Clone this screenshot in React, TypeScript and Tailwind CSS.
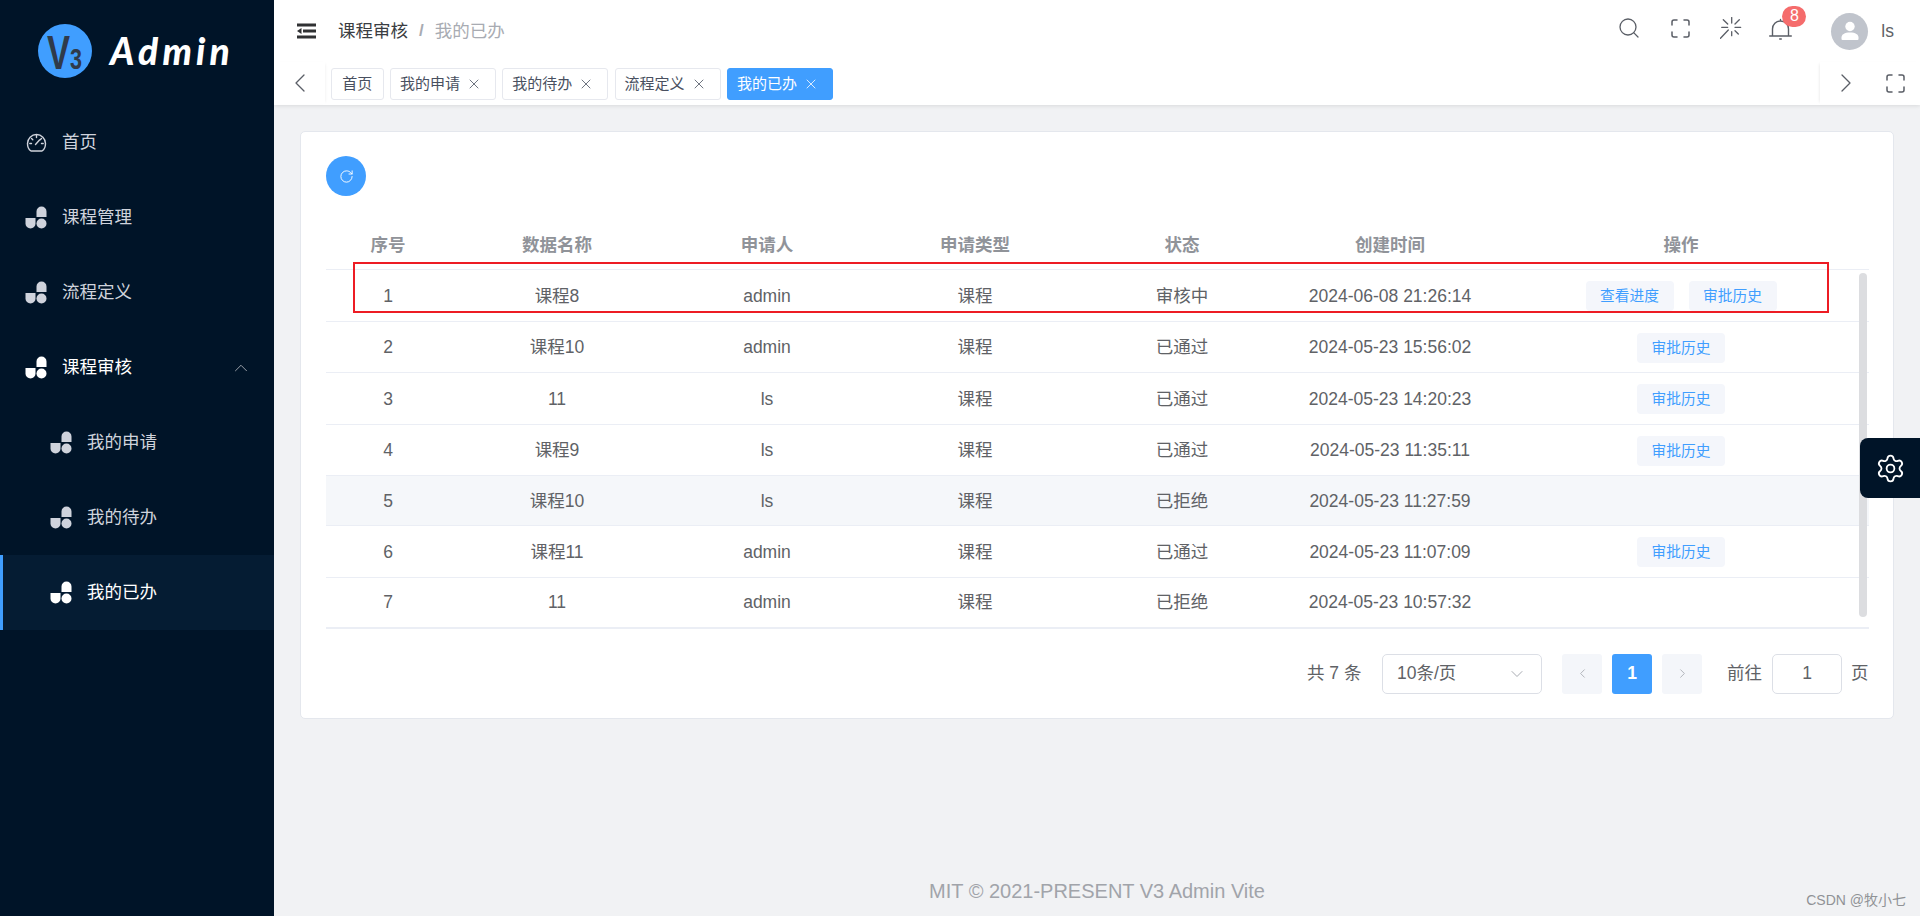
import React from "react";
import { ChevronDown, ChevronLeft, ChevronRight, ChevronUp, X, Search, Settings, RotateCw } from "lucide-react";

const sans = "font-['Liberation_Sans','Noto_Sans_CJK_SC',sans-serif]";

function Pills() {
  return (
    <svg width="22" height="23" viewBox="0 0 22 23" className="shrink-0">
      <path d="M16.500 0.500a5 5 0 0 1 5 5v5.500h-10V5.500a5 5 0 0 1 5-5z" fill="currentColor" />
      <path d="M0.500 12h10v5.500a5 5 0 0 1-10 0z" fill="currentColor" />
      <circle cx="16.500" cy="17.500" r="5" fill="currentColor" />
    </svg>
  );
}

function GaugeIcon() {
  return (
    <svg width="22" height="19" viewBox="0 0 22 19" fill="none" stroke="currentColor" strokeWidth="1.400" strokeLinecap="round" strokeLinejoin="round" className="shrink-0">
      <path d="M6 18C3.700 16.500 2.500 13.500 2.500 10.500a9 9 0 0 1 18 0c0 3-1.200 6-3.500 7.500z" />
      <path d="M11.500 2.500v2M4.800 10.500h1.700M16.500 10.500h1.700M6.500 5.500l1.300 1.300M16.500 5.500l-1.300 1.300M10.500 11.500l4-4.500" />
    </svg>
  );
}

function LogoMark() {
  return (
    <svg width="54" height="54" viewBox="0 0 54 54" className="shrink-0">
      <circle cx="27" cy="27" r="27" fill="#409eff" />
      <g transform="translate(9 45) scale(0.72 1)">
        <text x="0" y="0" fontFamily="'Liberation Sans', sans-serif" fontWeight="700" fill="#2f3a4a">
          <tspan fontSize="48">V</tspan>
          <tspan fontSize="30">3</tspan>
        </text>
      </g>
    </svg>
  );
}

function Chev({ right }: { right?: boolean }) {
  return (
    <svg width="10" height="18" viewBox="0 0 10 18" fill="none" stroke="currentColor" strokeWidth="1.300" strokeLinecap="round" strokeLinejoin="round">
      <path d={right ? "M1 1l8 8-8 8" : "M9 1L1 9l8 8"} />
    </svg>
  );
}

function Corners() {
  return (
    <svg width="19" height="19" viewBox="0 0 19 19" fill="none" stroke="currentColor" strokeWidth="1.500" strokeLinecap="round">
      <path d="M1 6V3a2 2 0 0 1 2-2h3M13 1h3a2 2 0 0 1 2 2v3M18 13v3a2 2 0 0 1-2 2h-3M6 18H3a2 2 0 0 1-2-2v-3" />
    </svg>
  );
}

function Spark() {
  return (
    <svg width="22" height="22" viewBox="0 0 22 22" fill="none" stroke="currentColor" strokeWidth="1.300" strokeLinecap="round">
      <path d="M11.700 0.500V6M19.300 2.700L15 7M20.700 10.300H15M18.300 17L15 13.700M11.700 18.700v-4M1.700 10.300h6M3.300 2.700L7.700 7M0.500 21.300L8.300 13" />
    </svg>
  );
}

function BellIcon() {
  return (
    <svg width="23" height="23" viewBox="0 0 23 23" fill="none" stroke="currentColor" strokeWidth="1.400" strokeLinecap="round">
      <path d="M0.700 18h21.600M3.500 18v-7a8 8 0 0 1 16 0v7M11.500 3V1.500M10.700 21h1.600" />
    </svg>
  );
}

function Fold() {
  return (
    <svg width="19" height="16" viewBox="0 0 19 16" fill="#303133">
      <rect x="0" y="0.500" width="19" height="3" />
      <rect x="6" y="6.500" width="13" height="3" />
      <rect x="0" y="12.500" width="19" height="3" />
      <path d="M0 8l4.500-3v6z" />
    </svg>
  );
}

function MenuItem({ label, sub, active, bright, arrow, gauge }: { label: string; sub?: boolean; active?: boolean; bright?: boolean; arrow?: boolean; gauge?: boolean }) {
  return (
    <div className={`relative flex h-[75px] items-center ${sub ? "pl-[50px]" : "pl-[25px]"} ${active ? "bg-[#051c33] text-white" : bright ? "text-white" : "text-[#cfd3dc]"}`}>
      {active && <div className="absolute inset-y-0 left-0 w-[3px] bg-[#409eff]" />}
      {gauge ? <GaugeIcon /> : <Pills />}
      <span className="ml-[15px] text-[17.500px]">{label}</span>
      {arrow && <ChevronUp size={22} strokeWidth={1} className="absolute left-[230px] text-[#a9adb5]" />}
    </div>
  );
}

function Tab({ label, active, close = true }: { label: string; active?: boolean; close?: boolean }) {
  return (
    <div className={`flex h-[32px] items-center rounded-[3px] border text-[15px] ${close ? "w-[106px] pl-[9px]" : "w-[52.700px] justify-center"} ${active ? "border-[#409eff] bg-[#409eff] text-white" : "border-[#e6e8ee] bg-white text-[#495060]"}`}>
      <span className="whitespace-nowrap">{label}</span>
      {close && <X size={16} strokeWidth={1.200} className="ml-[6px] shrink-0" />}
    </div>
  );
}

const Btn = ({ label }: { label: string }) => (
  <div className="flex h-[30px] w-[88px] items-center justify-center rounded-[4px] bg-[#f4f6fb] text-[14.700px] text-[#409eff]">{label}</div>
);

const cols = "grid grid-cols-[124px_214px_206px_210px_204px_212px_370px_3px]";

const rows = [
  ["1", "课程8", "admin", "课程", "审核中", "2024-06-08 21:26:14", 2],
  ["2", "课程10", "admin", "课程", "已通过", "2024-05-23 15:56:02", 1],
  ["3", "11", "ls", "课程", "已通过", "2024-05-23 14:20:23", 1],
  ["4", "课程9", "ls", "课程", "已通过", "2024-05-23 11:35:11", 1],
  ["5", "课程10", "ls", "课程", "已拒绝", "2024-05-23 11:27:59", 0],
  ["6", "课程11", "admin", "课程", "已通过", "2024-05-23 11:07:09", 1],
  ["7", "11", "admin", "课程", "已拒绝", "2024-05-23 10:57:32", 0],
] as const;

export default function App() {
  return (
    <div className={`flex h-[916px] w-[1920px] overflow-hidden bg-[#f1f2f4] ${sans}`}>
      <aside className="w-[274px] shrink-0 bg-[#001428]">
        <div className="flex h-[105px] items-center pl-[38px] pb-[3px]">
          <LogoMark />
          <span className="mb-[2px] ml-[18px] font-['Lato',sans-serif] text-[37px] font-black italic leading-none tracking-[4.200px] text-white">Admin</span>
        </div>
        <MenuItem label="首页" gauge />
        <MenuItem label="课程管理" />
        <MenuItem label="流程定义" />
        <MenuItem label="课程审核" bright arrow />
        <MenuItem label="我的申请" sub />
        <MenuItem label="我的待办" sub />
        <MenuItem label="我的已办" sub active />
      </aside>

      <div className="relative flex min-w-0 flex-1 flex-col">
        <header className="h-[105px] shrink-0 bg-white shadow-[0_1px_4px_rgba(0,0,0,0.1)]">
          <div className="flex h-[62px] items-center pl-[23px] pr-[26px]">
            <Fold />
            <span className="ml-[22px] text-[17.500px] text-[#3a3d42]">课程审核</span>
            <span className="mx-[11px] text-[17px] font-bold text-[#a8abb2]">/</span>
            <span className="text-[17.500px] text-[#a8abb2]">我的已办</span>
            <div className="ml-auto flex items-center text-[#5a5e66]">
              <div className="mb-[6px] flex items-center">
                <Search size={24} strokeWidth={1.300} />
                <div className="ml-[30px]"><Corners /></div>
                <div className="ml-[30px]"><Spark /></div>
                <div className="relative ml-[27px] mt-[2px]">
                  <BellIcon />
                  <span className="absolute -top-[12px] left-[13px] flex h-[21px] w-[24px] items-center justify-center rounded-full bg-[#f56c6c] text-[16px] text-white">8</span>
                </div>
              </div>
              <div className="ml-[39px] flex h-[37px] w-[37px] items-center justify-center rounded-full bg-[#c0c4cc]">
                <svg width="20" height="20" viewBox="0 0 20 20" fill="white">
                  <circle cx="10" cy="5.500" r="4.700" />
                  <path d="M1.500 18v-1.500c0-3 3-5 8.500-5s8.500 2 8.500 5V18a1 1 0 0 1-1 1h-15a1 1 0 0 1-1-1z" />
                </svg>
              </div>
              <span className="ml-[13px] text-[17.500px] text-[#606266]">ls</span>
            </div>
          </div>
          <div className="flex h-[43px] items-start">
            <div className="flex h-[42px] w-[51px] items-center pl-[21px] text-[#5a5e66] shadow-[2px_0_3px_-2px_rgba(0,0,0,0.08)]">
              <Chev />
            </div>
            <div className="ml-[6px] mt-[6px] flex gap-[6.300px]">
              <Tab label="首页" close={false} />
              <Tab label="我的申请" />
              <Tab label="我的待办" />
              <Tab label="流程定义" />
              <Tab label="我的已办" active />
            </div>
            <div className="ml-auto flex h-[42px] w-[100px] items-center pl-[21px] text-[#5a5e66] shadow-[-2px_0_3px_-2px_rgba(0,0,0,0.12)]">
              <Chev right />
              <div className="ml-[35px]"><Corners /></div>
            </div>
          </div>
        </header>

        <main className="flex-1 pl-[26px] pt-[26px]">
          <section className="h-[588px] w-[1594px] rounded-[5px] border border-[#e4e7ed] bg-white pl-[25px] pt-[24px]">
            <div className="flex h-[40px] w-[40px] items-center justify-center rounded-full bg-[#409eff] text-white">
              <RotateCw size={15} strokeWidth={1.500} />
            </div>
            <div className="relative mt-[32px] w-[1543px]">
              <div className={`${cols} h-[42px] border-b border-[#ebeef5] text-[17.500px] font-bold text-[#909399]`}>
                {["序号", "数据名称", "申请人", "申请类型", "状态", "创建时间", "操作"].map((t) => (
                  <div key={t} className="flex items-center justify-center pb-[7px]">{t}</div>
                ))}
              </div>
              {rows.map((r) => (
                <div key={r[0]} className={`${cols} border-b border-[#ebeef5] text-[17.500px] text-[#606266] ${r[6] ? "h-[51.500px]" : "h-[50px]"} ${r[0] === "5" ? "bg-[#f5f7fa]" : ""}`}>
                  {r.slice(0, 6).map((c, i) => (
                    <div key={i} className="flex items-center justify-center pt-[1px]">{c}</div>
                  ))}
                  <div className="flex items-center justify-center gap-[15px] pt-[2px]">
                    {r[6] === 2 && <Btn label="查看进度" />}
                    {r[6] >= 1 && <Btn label="审批历史" />}
                  </div>
                </div>
              ))}
              <div className="h-px bg-[#ebeef5]" />
              <div className="absolute left-[1533px] top-[45px] h-[344px] w-[8px] rounded-full bg-[#dcdde0]" />
            </div>
            <div className="mt-[25px] flex h-[40px] w-[1543px] items-center text-[17.500px] text-[#606266]">
              <span className="ml-[981px] w-[75px] whitespace-pre">共 7 条</span>
              <div className="flex h-[40px] w-[160px] items-center justify-between rounded-[5px] border border-[#dcdfe6] pl-[14px] pr-[14px]">
                <span>10条/页</span>
                <ChevronDown size={20} strokeWidth={1.200} className="text-[#a8abb2]" />
              </div>
              <div className="ml-[20px] flex h-[40px] w-[40px] items-center justify-center rounded-[3px] bg-[#f4f6fa] text-[#a8abb2]"><ChevronLeft size={15} strokeWidth={1.400} /></div>
              <div className="ml-[10px] flex h-[40px] w-[40px] items-center justify-center rounded-[3px] bg-[#409eff] font-bold text-white">1</div>
              <div className="ml-[10px] flex h-[40px] w-[40px] items-center justify-center rounded-[3px] bg-[#f4f6fa] text-[#a8abb2]"><ChevronRight size={15} strokeWidth={1.400} /></div>
              <span className="ml-[25px]">前往</span>
              <div className="ml-[10px] flex h-[40px] w-[70px] items-center justify-center rounded-[5px] border border-[#dcdfe6]">1</div>
              <span className="ml-[9px]">页</span>
            </div>
          </section>
        </main>

        <footer className="flex h-[37px] shrink-0 items-start justify-center text-[20px] leading-[24px] text-[#a1a4aa]">
          MIT © 2021-PRESENT V3 Admin Vite
        </footer>

        <div className="absolute right-0 top-[438px] flex h-[60px] w-[60px] items-center justify-center rounded-l-[8px] bg-[#001428] text-white">
          <Settings size={31} strokeWidth={1.400} />
        </div>
        <div className="absolute left-[79px] top-[262px] h-[51px] w-[1476px] border-2 border-[#ed1c24]" />
        <div className="absolute bottom-[7px] right-[14px] text-[14px] leading-[18px] text-[#909296]">CSDN @牧小七</div>
      </div>
    </div>
  );
}
